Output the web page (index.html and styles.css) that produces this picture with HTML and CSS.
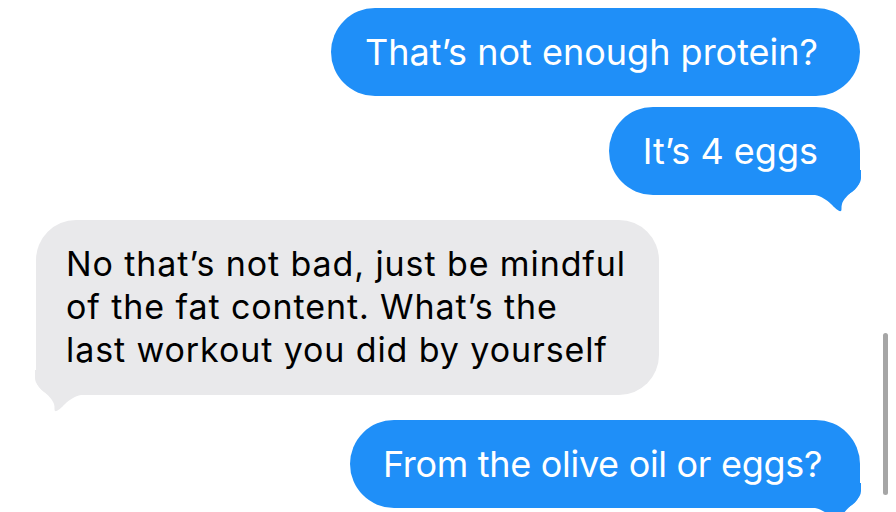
FILE: index.html
```html
<!DOCTYPE html>
<html lang="en">
<head>
<meta charset="utf-8">
<title>Messages</title>
<link rel="stylesheet" href="styles.css">
</head>
<body>
<main class="thread">
  <div class="msg sent gap-s">That’s not enough protein?</div>
  <div class="msg sent tailed gap-l">It’s 4 eggs
    <svg class="tail tail-right" viewBox="0 0 46 42" width="46" height="42"><path d="M0 0 H46 V8 C46 18 30 24 27 34 C26 37 27 40 26 41 C24 42 20 38 16 34 C12 30 6 26 0 25 Z"/></svg>
  </div>
  <div class="msg recv tailed gap-l">No that’s not bad, just be mindful<br>of the fat content. What’s the<br>last workout you did by yourself
    <svg class="tail tail-left" viewBox="0 0 46 42" width="46" height="42"><path d="M0 0 H46 V8 C46 18 30 24 27 34 C26 37 27 40 26 41 C24 42 20 38 16 34 C12 30 6 26 0 25 Z"/></svg>
  </div>
  <div class="msg sent tailed tight">From the olive oil or eggs?
    <svg class="tail tail-right" viewBox="0 0 46 42" width="46" height="42"><path d="M0 0 H46 V8 C46 18 30 24 27 34 C26 37 27 40 26 41 C24 42 20 38 16 34 C12 30 6 26 0 25 Z"/></svg>
  </div>
</main>
<div class="scrollbar"></div>
</body>
</html>
```

FILE: styles.css
```css
html, body {
  margin: 0;
  padding: 0;
  width: 896px;
  height: 512px;
  overflow: hidden;
  background: #ffffff;
}

.thread {
  display: flex;
  flex-direction: column;
  padding: 8px 36px 0 36px;
  font-family: "Inter", "Roboto", sans-serif;
}

.msg {
  position: relative;
  white-space: nowrap;
}

.sent {
  align-self: flex-end;
  background: #1f8ff8;
  color: #ffffff;
  border-radius: 44px;
  font-size: 36px;
  line-height: 44px;
  padding: 22px 42px 22px 34px;
}

.sent.tailed {
  border-bottom-right-radius: 18px;
}

.sent.tight {
  letter-spacing: -0.3px;
  padding: 22px 38px 22px 33px;
}

.recv {
  align-self: flex-start;
  background: #e9e9eb;
  color: #000000;
  border-radius: 40px;
  font-size: 34px;
  letter-spacing: 0.9px;
  line-height: 43px;
  padding: 22px 33px 24px 30px;
}

.recv.tailed {
  border-bottom-left-radius: 18px;
}

.gap-s { margin-bottom: 11px; }
.gap-l { margin-bottom: 25px; }

.tail {
  position: absolute;
  bottom: -17px;
}

.tail-right {
  right: -1px;
  fill: #1f8ff8;
}

.tail-left {
  left: -1px;
  transform: scaleX(-1);
  fill: #e9e9eb;
}

.scrollbar {
  position: absolute;
  left: 883px;
  top: 333px;
  width: 5px;
  height: 162px;
  border-radius: 3px;
  background: #a6a6a6;
}
```
